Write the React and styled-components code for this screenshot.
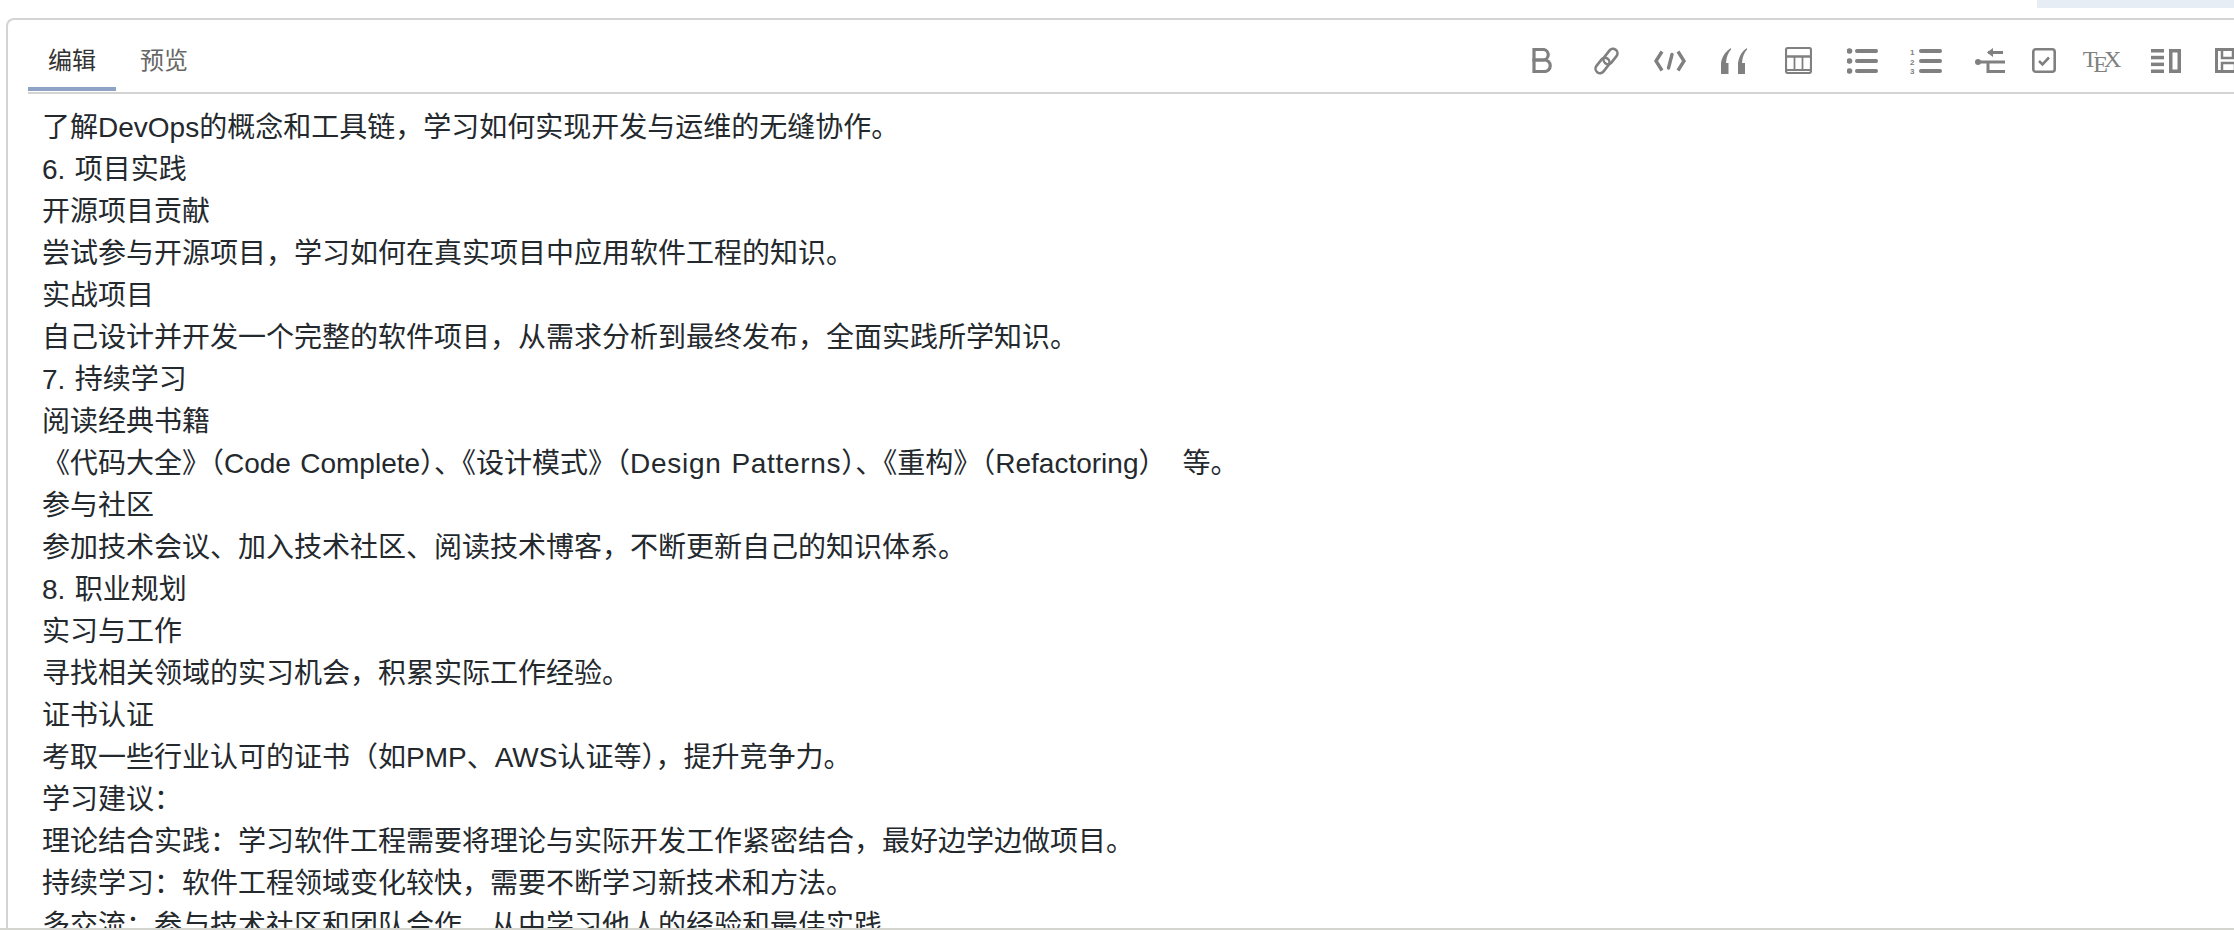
import React from 'react';
import styled, { createGlobalStyle } from 'styled-components';

const GlobalStyle = createGlobalStyle`
  html, body {
    margin: 0;
    padding: 0;
    background: #fff;
    overflow: hidden;
  }
`;

const Page = styled.div`
  display: flex;
  flex-direction: column;
  width: 2234px;
  height: 930px;
  overflow: hidden;
  font-family: "Liberation Sans", "Noto Sans CJK SC", sans-serif;
`;

const TopStrip = styled.div`
  display: flex;
  justify-content: flex-end;
  height: 18px;
  flex: none;
`;

const Highlight = styled.div`
  width: 197px;
  height: 8px;
  background: #e6edf5;
`;

const Editor = styled.div`
  flex: 1;
  min-height: 0;
  margin-left: 6px;
  padding-left: 20px;
  border-top: 2px solid #d4d4d4;
  border-left: 2px solid #d4d4d4;
  border-top-left-radius: 8px;
  overflow: hidden;
`;

const Header = styled.div`
  display: flex;
  justify-content: space-between;
  height: 72px;
  border-bottom: 2px solid #d4d4d4;
`;

const Tabs = styled.div`
  display: flex;
`;

const Tab = styled.div`
  display: flex;
  align-items: center;
  height: 71px;
  padding: 9px 20px 0;
  box-sizing: border-box;
  margin-right: 4px;
  font-size: 24px;
  color: ${(p) => (p.$active ? '#333' : '#666')};
  border-bottom: 4px solid ${(p) => (p.$active ? '#8ea3c6' : 'transparent')};
`;

const Toolbar = styled.div`
  display: flex;
  flex: none;
  width: 724px;
  height: 72px;
`;

const Tool = styled.div`
  display: flex;
  flex: none;
  align-items: center;
  justify-content: center;
  width: ${(p) => p.$w || 64}px;
  padding-top: 9px;
  color: #808080;
`;

const TexLogo = styled.div`
  display: flex;
  font-family: "Liberation Serif", serif;
  font-size: 24px;
  line-height: 24px;
  margin-top: -3px;
  color: #808080;
`;

const TexE = styled.span`
  margin: 0 -4px;
  transform: translateY(5px);
`;

const Body = styled.div`
  padding: 13px 0 0 14px;
  font-size: 28px;
  line-height: 42px;
  word-spacing: 1.5px;
  color: #24292e;
`;

const Line = styled.div`
  white-space: nowrap;
`;

const Latin = styled.span`
  letter-spacing: ${(p) => p.$spacing || 0}px;
  margin-right: ${(p) => p.$after || 0}px;
`;

const BottomRule = styled.div`
  flex: none;
  height: 2px;
  background: #d5d5cf;
`;

const BoldIcon = () => (
  <svg width="20" height="25" viewBox="0 0 20 25" fill="none" stroke="currentColor" strokeWidth="3.2">
    <path d="M2 1.500h9a5.200 5.200 0 0 1 0 10.500H2z" />
    <path d="M2 12h10.500a5.700 5.700 0 0 1 0 11.500H2z" />
  </svg>
);

const LinkIcon = () => (
  <svg width="27" height="28" viewBox="0 0 27 28" fill="none" stroke="currentColor" strokeWidth="2.600">
    <rect x="-8.500" y="-4.500" width="17" height="9" rx="4.500" transform="translate(17.500 9.500) rotate(-52)" />
    <rect x="-8.500" y="-4.500" width="17" height="9" rx="4.500" transform="translate(9.500 18.500) rotate(-52)" />
  </svg>
);

const CodeIcon = () => (
  <svg width="32" height="22" viewBox="0 0 32 22" fill="none" stroke="currentColor" strokeWidth="3.400">
    <path d="M8 1.500 2 11l6 9.500" />
    <path d="m24 1.500 6 9.500-6 9.500" />
    <path d="M18 4.500 14.500 18" strokeLinecap="round" />
  </svg>
);

const QuoteIcon = () => (
  <svg width="26" height="26" viewBox="0 0 26 26" fill="currentColor">
    <path d="M0 26V15C1 8 5 3 10 0v1.500C7 5 5.500 9 5 15h2.500v11z" />
    <path d="M17 26V15C18 8 21 3 26 0v1.500C23 5 21.500 9 21 15h3v11z" />
  </svg>
);

const TableIcon = () => (
  <svg width="27" height="27" viewBox="0 0 27 27" fill="none" stroke="currentColor" strokeWidth="2.200">
    <rect x="1" y="1" width="25" height="25" rx="2" />
    <path d="M1 9.500h25" strokeWidth="2.400" />
    <path d="M1 23h25M9.500 10v14M17.500 10v14" strokeWidth="1.800" />
  </svg>
);

const ListIcon = () => (
  <svg width="31" height="26" viewBox="0 0 31 26" fill="currentColor">
    <circle cx="2.500" cy="3" r="2.800" />
    <circle cx="2.500" cy="13" r="2.800" />
    <circle cx="2.500" cy="23" r="2.800" />
    <rect x="8" y="1" width="23" height="4" rx="2" />
    <rect x="8" y="11" width="23" height="4" rx="2" />
    <rect x="8" y="21" width="23" height="4" rx="2" />
  </svg>
);

const OrderedIcon = () => (
  <svg width="32" height="26" viewBox="0 0 32 26" fill="currentColor">
    <text x="0" y="7" fontSize="8" fontWeight="700" fontFamily="Liberation Sans">1</text>
    <text x="0" y="16.500" fontSize="8" fontWeight="700" fontFamily="Liberation Sans">2</text>
    <text x="0" y="26" fontSize="8" fontWeight="700" fontFamily="Liberation Sans">3</text>
    <rect x="9" y="1" width="23" height="4" rx="2" />
    <rect x="9" y="11" width="23" height="4" rx="2" />
    <rect x="9" y="21" width="23" height="4" rx="2" />
  </svg>
);

const IndentIcon = () => (
  <svg width="30" height="26" viewBox="0 0 30 26" fill="none" stroke="currentColor" strokeWidth="3">
    <circle cx="3" cy="14" r="3" fill="currentColor" stroke="none" />
    <path d="M3 14h27" />
    <path d="M13 4.500h15" />
    <path d="M12 4.500 18 0v9z" fill="currentColor" strokeWidth="0" />
    <path d="M13 14v9.500h17" />
  </svg>
);

const CheckIcon = () => (
  <svg width="24" height="25" viewBox="0 0 24 25" fill="none" stroke="currentColor" strokeWidth="2.600">
    <rect x="1.300" y="1.300" width="21.400" height="22.400" rx="2.500" />
    <path d="m7 13 3.500 3.500L17 9.500" />
  </svg>
);

const SideIcon = () => (
  <svg width="30" height="24" viewBox="0 0 30 24" fill="currentColor">
    <rect x="0" y="0" width="13" height="3.500" />
    <rect x="0" y="6.800" width="13" height="3.500" />
    <rect x="0" y="13.600" width="13" height="3.500" />
    <rect x="0" y="20.500" width="13" height="3.500" />
    <path d="M18 0h12v24H18zm3.500 3.500v17h5v-17z" fillRule="evenodd" />
  </svg>
);

const SaveIcon = () => (
  <svg width="26" height="25" viewBox="0 0 26 25" fill="none" stroke="currentColor" strokeWidth="3">
    <path d="M1.500 1.500h17l6 6v16h-23z" />
    <path d="M7 2v8h11V2M7 23.500V15h13v8.500" strokeWidth="2.500" />
  </svg>
);

const lines = [
  '了解DevOps的概念和工具链\uFF0C学习如何实现开发与运维的无缝协作。',
  '6. 项目实践',
  '开源项目贡献',
  '尝试参与开源项目\uFF0C学习如何在真实项目中应用软件工程的知识。',
  '实战项目',
  '自己设计并开发一个完整的软件项目\uFF0C从需求分析到最终发布\uFF0C全面实践所学知识。',
  '7. 持续学习',
  '阅读经典书籍',
  <>
    {'《代码大全》\uFF08Code Complete\uFF09、《设计模式》\uFF08'}
    <Latin $spacing={0.7}>Design Patterns</Latin>
    {'\uFF09、《重构》\uFF08Refactoring'}
    <Latin $after={16}>{'\uFF09'}</Latin>
    等。
  </>,
  '参与社区',
  '参加技术会议、加入技术社区、阅读技术博客\uFF0C不断更新自己的知识体系。',
  '8. 职业规划',
  '实习与工作',
  '寻找相关领域的实习机会\uFF0C积累实际工作经验。',
  '证书认证',
  '考取一些行业认可的证书\uFF08如PMP、AWS认证等\uFF09\uFF0C提升竞争力。',
  '学习建议\uFF1A',
  '理论结合实践\uFF1A学习软件工程需要将理论与实际开发工作紧密结合\uFF0C最好边学边做项目。',
  '持续学习\uFF1A软件工程领域变化较快\uFF0C需要不断学习新技术和方法。',
  '多交流\uFF1A参与技术社区和团队合作\uFF0C从中学习他人的经验和最佳实践。',
];

const App = () => (
  <Page>
    <GlobalStyle />
    <TopStrip>
      <Highlight />
    </TopStrip>
    <Editor>
      <Header>
        <Tabs>
          <Tab $active>编辑</Tab>
          <Tab>预览</Tab>
        </Tabs>
        <Toolbar>
          <Tool><BoldIcon /></Tool>
          <Tool><LinkIcon /></Tool>
          <Tool><CodeIcon /></Tool>
          <Tool><QuoteIcon /></Tool>
          <Tool><TableIcon /></Tool>
          <Tool><ListIcon /></Tool>
          <Tool><OrderedIcon /></Tool>
          <Tool><IndentIcon /></Tool>
          <Tool $w={44}><CheckIcon /></Tool>
          <Tool $w={72}>
            <TexLogo>T<TexE>E</TexE>X</TexLogo>
          </Tool>
          <Tool $w={56}><SideIcon /></Tool>
          <Tool $w={68}><SaveIcon /></Tool>
        </Toolbar>
      </Header>
      <Body>
        {lines.map((line, i) => (
          <Line key={i}>{line}</Line>
        ))}
      </Body>
    </Editor>
    <BottomRule />
  </Page>
);

export default App;
